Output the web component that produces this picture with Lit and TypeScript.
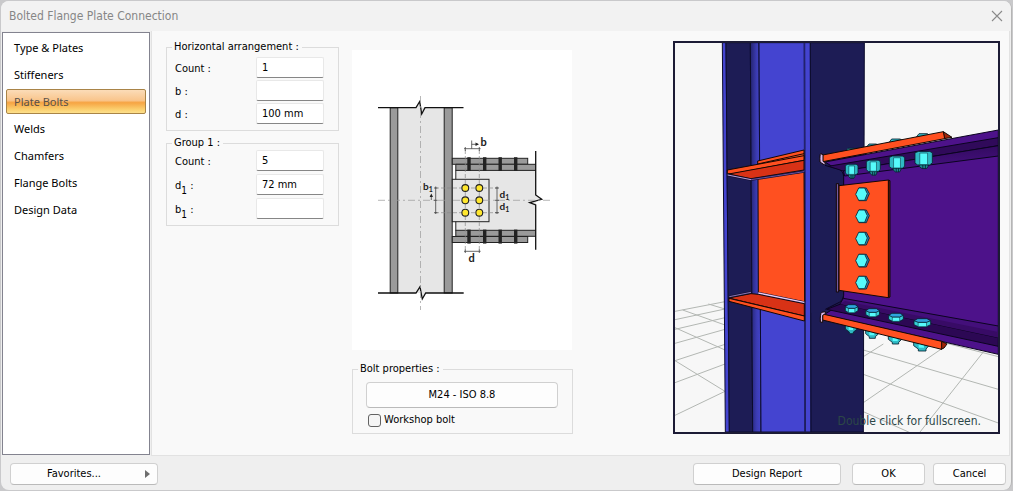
import { LitElement, html, svg, css } from "lit";
import { customElement, state } from "lit/decorators.js";

@customElement("connection-diagram")
class ConnectionDiagram extends LitElement {
  static styles = css`
    :host { display: block; background: #fff; }
    svg { display: block; width: 100%; height: auto; }
    text { font: 700 11px Lato, "Open Sans", sans-serif; fill: #1c1c1c; }
    .tight { font-size: 10px; }
    .small { font-size: 7px; }
  `;

  render() {
    const studs = [115.3, 131, 146.5, 162];
    return html`<svg viewBox="0 0 220 300" role="img" aria-label="Plate bolt dimensions">
      <rect x="40" y="57.7" width="59" height="185.3" fill="#e6e6e6" />
      <g fill="#9a9a9a" stroke="#222" stroke-width="1">
        <rect x="38.2" y="57.7" width="7.6" height="185.3" />
        <rect x="92.2" y="57.7" width="8" height="185.3" />
      </g>
      <path d="M64 57.7L67.5 51.5L69.7 64L73 57.7V243L70.3 249L68 236.7L64 243Z" fill="#e6e6e6" />
      <rect x="103.7" y="120" width="80" height="61" fill="#e6e6e6" />
      <path d="M183 145L189.7 149L183 151Z" fill="#e6e6e6" />
      <path d="M103.8 120V181" stroke="#222" />
      <g fill="#9a9a9a" stroke="#222" stroke-width="1">
        <rect x="100.3" y="108.3" width="75.4" height="6" />
        <path d="M183.7 114.3H103.8V120.4H183.7M183.7 180.3H103.8V186.3H183.7" />
        <rect x="100.3" y="186.5" width="75.4" height="6" />
      </g>
      <g fill="#222">
        ${studs.map((x) => svg`<rect x=${x} y="107.2" width="3.4" height="13.8" /><rect x=${x} y="179.6" width="3.4" height="14" />`)}
      </g>
      <path d="M177.7 152.7L189.7 149L183.7 144V155Z" fill="#e6e6e6" />
      <rect x="100.3" y="129.3" width="36.7" height="42.4" fill="#e6e6e6" stroke="#222" />
      <g fill="none" stroke="#111" stroke-width="1.3">
        <path d="M26 57.7H64L67.7 51.5L69.7 64L73 57.7H111.5" />
        <path d="M26 243H64L68 236.7L70.3 249L73.7 243H111.7" />
        <path d="M183.7 101V145L189.7 149.3L177.7 152.7L183.7 155V199.7" />
      </g>
      <g fill="none" stroke="#999" stroke-width=".7" stroke-dasharray="7 3 2 3">
        <path d="M68.5 46V260M26 150.3H198" />
      </g>
      <g fill="none" stroke="#888" stroke-width=".7" stroke-dasharray="4 2">
        <path d="M113.3 100V201M127.3 100V201M83 138H146M83 162.7H146" />
      </g>
      <g fill="#ffe72e" stroke="#222" stroke-width="1.1">
        ${[138, 150.3, 162.7].map((y) => [113.3, 127.3].map((x) => svg`<circle cx=${x} cy=${y} r="3.4" />`))}
      </g>
      <g fill="none" stroke="#444" stroke-width=".8">
        <path d="M112 98.7H128.6M113.3 97V101M127.3 97V101M119.7 90.5V98.7M119.7 94.3H126" />
        <path d="M112 201.3H128.6M113.3 199.5V203M127.3 199.5V203" />
        <path d="M83.7 136.5V164M82 138H85.5M82 150.3H85.5M82 162.7H85.5M79.3 150V145" />
        <path d="M145 136.5V164M143 138H147M143 150.3H147M143 162.7H147" />
      </g>
      <path d="M123.5 92.6L127 94.3L123.5 96ZM77.6 147L79.3 143.5L81 147Z" fill="#222" />
      <text x="128.5" y="96">b</text>
      <text x="116.5" y="211.5">d</text>
      <text class="tight" x="71" y="140">b<tspan class="small" dy="2">1</tspan></text>
      <text class="tight" x="147.5" y="148">d<tspan class="small" dy="2">1</tspan></text>
      <text class="tight" x="147.5" y="160">d<tspan class="small" dy="2">1</tspan></text>
    </svg>`;
  }
}

@customElement("connection-view")
class ConnectionView extends LitElement {
  static styles = css`
    :host { display: block; position: relative; }
    svg { display: block; width: 100%; height: auto; }
    .hint {
      position: absolute; right: 19px; bottom: 5px;
      font: 12px/16px "DejaVu Sans Condensed", "DejaVu Sans", sans-serif; color: #2c4747;
    }
  `;

  private nut(cx: number, cy: number, w: number) {
    const h = w * 0.32;
    const r = w / 2;
    return svg`<g transform="translate(${cx} ${cy})" stroke="#062030" stroke-width="2.5">
      <path d="M${-r * 0.5} ${h}V${h + 8}L${-r * 0.2} ${h + 14}H${r * 0.35}L${r * 0.5} ${h + 8}V${h}Z" fill="#1d8a90" />
      <path d="M${-r * 0.1} ${h}V${h + 14}M${r * 0.2} ${h}V${h + 14}" />
      <path d="M${-r} ${-h}L${-r * 0.6} ${-h - 4}H${r * 0.7}L${r} ${-h}V${h - 3}L${r * 0.7} ${h + 3}H${-r * 0.7}L${-r} ${h - 2}Z" fill="#2fb9c4" />
      <path d="M${-r * 0.45} ${-h + 1}H${r * 0.45}V${h + 2}H${-r * 0.45}Z" fill="#56fbfb" stroke-width="1.5" />
    </g>`;
  }

  private head(cx: number, cy: number, w: number) {
    const r = w / 2;
    return svg`<g transform="translate(${cx} ${cy})" stroke="#062030" stroke-width="2.5" stroke-linejoin="round">
      <path d="M${-r} -6V6L${-r * 0.5} 12H${r * 0.5}L${r} 6V-6Z" fill="#35d0d8" />
      <path d="M${-r * 0.5} -1H${r * 0.5}V12H${-r * 0.5}Z" fill="#56fbfb" stroke-width="1.5" />
      <path d="M${-r} -6L${-r * 0.55} -12H${r * 0.55}L${r} -6L${r * 0.5} -1H${-r * 0.5}Z" fill="#2da4dc" />
    </g>`;
  }

  render() {
    return html`<svg viewBox="9 15 981 1179" role="img" aria-label="3D view of the connection">
        <defs>
          <linearGradient id="fillet"><stop offset="0" stop-color="#24246f" /><stop offset=".6" stop-color="#3c3cb4" /><stop offset="1" stop-color="#4343cc" /></linearGradient>
          <linearGradient id="under" x1="0" y1="0" x2="0.1" y2="1"><stop offset="0" stop-color="#300a5c" /><stop offset="1" stop-color="#4b1288" /></linearGradient>
        </defs>
        <rect x="9" y="15" width="981" height="1179" fill="#f7f7f7" />
        <g transform="translate(0 762)" fill="none" stroke="#b3b7b3" stroke-width="3">
          <path d="M15 64L165 35M15 89L165 57M15 118L165 83M15 160L165 118M15 212L165 163M15 278L165 222M15 376L165 304" />
          <path d="M15 212L165 304M15 113L165 180M38 60L165 105M115 42L165 57" />
          <path d="M580 180L985 298M580 253L985 399M580 365L720 428M830 160L985 200M580 338L827 168M580 200L640 162M750 426L940 186" />
        </g>
        <g stroke="#0c0c2c" stroke-width="3">
          <path d="M157 20H168L178 1188H166Z" fill="#4444d0" />
          <path d="M168 20H241L248 1188H178Z" fill="#1d1c55" />
          <path d="M241 20H267L273 1188H248Z" fill="url(#fillet)" />
          <path d="M267 20H403L405 1188H273Z" fill="#4444d0" />
          <path d="M404 20H421L423 1188H406Z" fill="#4444d0" />
          <path d="M421 20H583L580 1188H423Z" fill="#1d1c55" />
        </g>
        <path d="M403 20L405 1188" stroke="#22226c" stroke-width="4" />
        <g stroke="#140804" stroke-width="3">
          <path d="M264 426L402 408L404 798L265 772Z" fill="#ff5020" />
          <path d="M263 375L402 342V370L263 396Z" fill="#ff5020" />
          <path d="M263 384L402 353" />
          <path d="M172 402L402 359V373L185 414L172 413Z" fill="#ff5020" />
          <path d="M176 414L402 373V402L243 428Z" fill="#d83216" />
          <path d="M176 354L243 341L265 343L403 371V408Z" transform="translate(0 432)" fill="#d83216" />
          <path d="M177 787L403 840V855L177 796Z" fill="#ff5020" />
        </g>
        <g fill="none" stroke="#141030" stroke-width="7">
          <path d="M172 417L243 431L402 407M178 782L243 769M265 771L403 799" />
          <path d="M173 417L243 431" stroke="#b8a0dc" stroke-width="3" />
          <path d="M243 431L402 407" stroke="#6a52a0" stroke-width="3" />
          <path d="M178 782L243 769" stroke="#8a78b8" stroke-width="3" />
          <path d="M265 771L403 799" stroke="#ecccf4" stroke-width="4" />
        </g>

        <g stroke="#0b0420" stroke-width="3">
          <path d="M465 378L985 282V955L462 836L520 800V412Z" fill="#4d128a" />
          <path d="M474 391L985 305V329L522 405L505 402Z" fill="#300a5a" />
          <path d="M520 405L985 329V360L524 420Z" fill="url(#under)" />
          <path d="M520 787L985 870V905L510 804Z" fill="#430f7a" />
          <path d="M470 820L512 804L985 905V931Z" fill="#2c0854" />
          <path d="M510 804L985 905V888L525 795Z" fill="#380b66" stroke="none" />
        </g>
        <path d="M424 390H470L508 401Q520 405 521 422V778Q520 792 508 799L466 820L450 830H424Z" fill="#1d1c55" />
        <path d="M465 388L508 401Q520 405 521 422V778Q520 792 508 799L466 820" fill="none" stroke="#0b0420" stroke-width="3" />

        <g stroke="#062030" stroke-width="2.5" fill="#2fb9c4">
          <path d="M527 345L534 337H552L560 342ZM588 335L597 324H618L629 328ZM655 322L665 309H690L698 313ZM735 308L747 293H772L780 299Z" />
          <path d="M526 865V879L538 888V893H550V888L561 880V865ZM587 880V893L598 902V907H616V902L625 894V880ZM655 895V910L667 919V924H686V919L695 910V895ZM731 912V929L745 939V945H768V939L776 930V912Z" />
        </g>
        <g fill="#56fbfb">
          <path d="M536 868H549V882H536ZM598 884H613V898H598ZM668 900H683V915H668ZM746 918H762V935H746Z" />
        </g>
        <g stroke="#140804" stroke-width="3">
          <path d="M820 287L846 304L822 308Z" fill="#a02408" />
          <path d="M458 357L820 287L824 308L458 377Z" fill="#ff5020" />
          <path d="M815 916L831 924L822 936L813 940Z" fill="#a02408" />
          <path d="M458 834L815 916V940L458 852Z" fill="#ff5020" />
          <path d="M655 432L660 434V783L655 785Z" fill="#7a1c08" />
          <path d="M507 449L655 432V785L507 763Z" fill="#ff5020" />
          <path d="M499 443H506V768H499Z" fill="#75589e" />
          <path d="M452 353Q449 355 450 378L462 386L467 381L459 376V356Z" fill="#d8b8ec" />
          <path d="M466 827L455 829Q450 832 451 858L458 859V838L466 833Z" fill="#d8b8ec" />
        </g>
        ${this.nut(545, 401, 38)}${this.nut(610, 390, 42)}${this.nut(681, 379, 46)}${this.nut(761, 367, 52)}
        ${this.head(545, 818, 38)}${this.head(608, 830, 41)}${this.head(678, 844, 44)}${this.head(757, 860, 50)}
        ${[475, 541, 608, 674, 740].map((y) => svg`<g transform="translate(577 ${y})" stroke="#062030" stroke-width="2.5">
          <path d="M-10 -19L12 -19L21 -2L12 19H-10Z" fill="#2f88b8" />
          <path d="M-20 0L-11 -19H7L15 -2L7 18H-11Z" fill="#56fbfb" />
        </g>`)}
        <rect x="12" y="18" width="975" height="1173" fill="none" stroke="#1c1b35" stroke-width="6" />
      </svg>
      <span class="hint">Double click for fullscreen.</span>`;
  }
}

@customElement("app-root")
class AppRoot extends LitElement {
  @state() private page = "Plate Bolts";

  static styles = css`
    :host {
      display: block; min-height: 100vh; box-sizing: border-box; padding: 1px 1px 0;
      background: #c9c9cb; color: #000;
      font: 11px/14px "DejaVu Sans Condensed", "DejaVu Sans", sans-serif;
    }
    button, input { font: inherit; color: inherit; margin: 0; box-sizing: border-box; }
    .dialog {
      display: flex; flex-direction: column; min-height: calc(100vh - 2px);
      border-radius: 8px; background: #efefef; overflow: hidden;
      box-sizing: border-box; border-right: 1px solid #b5b5b5;
    }
    .title {
      display: flex; align-items: center; justify-content: space-between;
      height: 30px; padding: 0 8px; background: #f2f2f2;
    }
    h1 { margin: 0; font-size: 12px; line-height: 16px; font-weight: 400; color: #868686; }
    .close { display: flex; padding: 0; border: 0; background: none; }
    .close svg { width: 12px; height: 12px; }
    .body { flex: 1; display: flex; gap: 1px; }
    nav {
      flex: none; display: flex; flex-direction: column; gap: 2px;
      box-sizing: border-box; width: 148px; margin: 1px 0 1px 1px; padding: 2px 3px;
      background: #fff; border: 1px solid #83838f;
      font-family: "Noto Sans", "Open Sans", sans-serif;
    }
    .item {
      height: 25px; padding: 0 7px; text-align: left; border: 1px solid transparent;
      border-radius: 2px; background: none;
    }
    .item.on {
      color: #5a5148; border-color: #a98447;
      background: linear-gradient(#fbdcb8, #f9c58c 45%, #f6a443 55%, #fbd070 85%, #fde08c);
    }
    .content {
      flex: 1; display: flex; align-items: flex-start; padding: 9px 9px 0 14px; min-width: 0;
      background: #f9f9f9; border: solid #e2e2e2; border-width: 0 1px 1px; margin-right: 1px;
    }
    .fields { flex: none; width: 173px; margin-right: 13px; }
    .middle { flex: none; width: 221px; margin-right: 20px; padding-top: 10px; }
    .picture { width: 220px; }
    .view { flex: 0 1 327px; margin: 1px 0 0 auto; min-width: 0; }
    fieldset { margin: 0; padding: 3px 14px 6px 8px; min-width: 0; border: 1px solid #dcdcdc; }
    legend { padding: 0 3px 0 2px; margin-left: -3px; }
    .rows { display: flex; flex-direction: column; gap: 2px; }
    .group { margin-top: 5px; padding-top: 0; }
    .group .rows { gap: 3px; }
    .row { display: flex; justify-content: space-between; align-items: center; height: 21px; }
    .row label { padding-top: 3px; }
    sub { font-size: 10px; line-height: 0; vertical-align: -5px; }
    .row input {
      width: 68px; height: 21px; padding: 0 5px 1px; background: #fff; outline: 0;
      border: 1px solid #e8e8e8; border-bottom-color: #868686; border-radius: 2px;
    }
    .bolt { margin-top: 12px; padding: 6px 14px; }
    .bolt legend { margin-left: -3px; }
    .push {
      padding: 0 8px; height: 22px; background: #fdfdfd; border: 1px solid #d0d0d0;
      border-bottom-color: #bababa; border-radius: 4px;
    }
    .bolt { padding-left: 13px; }
    .bolt legend { margin-left: -8px; }
    .bolt .push { width: 100%; height: 26px; }
    .check { display: flex; align-items: center; gap: 3px; margin: 5px 0 0 2px; }
    .check input {
      appearance: none; width: 13px; height: 13px; background: #f5f5f5;
      border: 1px solid #626262; border-radius: 3px;
    }
    .footer { display: flex; gap: 8px; padding: 7px 5px 5px 9px; }
    .wide { width: 148px; }
    .narrow { width: 73px; }
    .favorites {
      display: flex; align-items: center; gap: 8px; margin-right: auto; padding: 0 7px 0 0;
    }
    .favorites span { flex: 1; }
    .favorites svg { width: 5px; height: 8px; }
    .report { margin-right: 3px; }
  `;

  private row(id: string, label: unknown, value: string) {
    return html`<div class="row"><label for=${id}>${label}</label><input id=${id} type="text" .value=${value} /></div>`;
  }

  render() {
    const pages = ["Type & Plates", "Stiffeners", "Plate Bolts", "Welds", "Chamfers", "Flange Bolts", "Design Data"];
    return html`<div class="dialog" role="dialog" aria-labelledby="title">
      <header class="title">
        <h1 id="title">Bolted Flange Plate Connection</h1>
        <button class="close" aria-label="Close">
          <svg viewBox="0 0 12 12"><path d="M1 1L11 11M11 1L1 11" fill="none" stroke="#8a8a8a" stroke-width="1.1" /></svg>
        </button>
      </header>
      <div class="body">
        <nav>
          ${pages.map((p) => html`<button class="item ${p === this.page ? "on" : ""}" @click=${() => (this.page = p)}>${p}</button>`)}
        </nav>
        <main class="content">
          <div class="fields">
            <fieldset>
              <legend>Horizontal arrangement :</legend>
              <div class="rows">
                ${this.row("h-count", "Count :", "1")} ${this.row("h-b", "b :", "")} ${this.row("h-d", "d :", "100 mm")}
              </div>
            </fieldset>
            <fieldset class="group">
              <legend>Group 1 :</legend>
              <div class="rows">
                ${this.row("g-count", "Count :", "5")} ${this.row("g-d", html`d<sub>1</sub> :`, "72 mm")}
                ${this.row("g-b", html`b<sub>1</sub> :`, "")}
              </div>
            </fieldset>
          </div>
          <div class="middle">
            <connection-diagram class="picture"></connection-diagram>
            <fieldset class="bolt">
              <legend>Bolt properties :</legend>
              <button class="push">M24 - ISO 8.8</button>
              <label class="check"><input type="checkbox" />Workshop bolt</label>
            </fieldset>
          </div>
          <connection-view class="view"></connection-view>
        </main>
      </div>
      <footer class="footer">
        <button class="push wide favorites"><span>Favorites...</span>
          <svg viewBox="0 0 5 8"><path d="M0 0L5 4L0 8Z" fill="#6e6e6e" /></svg>
        </button>
        <button class="push wide report">Design Report</button>
        <button class="push narrow">OK</button>
        <button class="push narrow">Cancel</button>
      </footer>
    </div>`;
  }
}
